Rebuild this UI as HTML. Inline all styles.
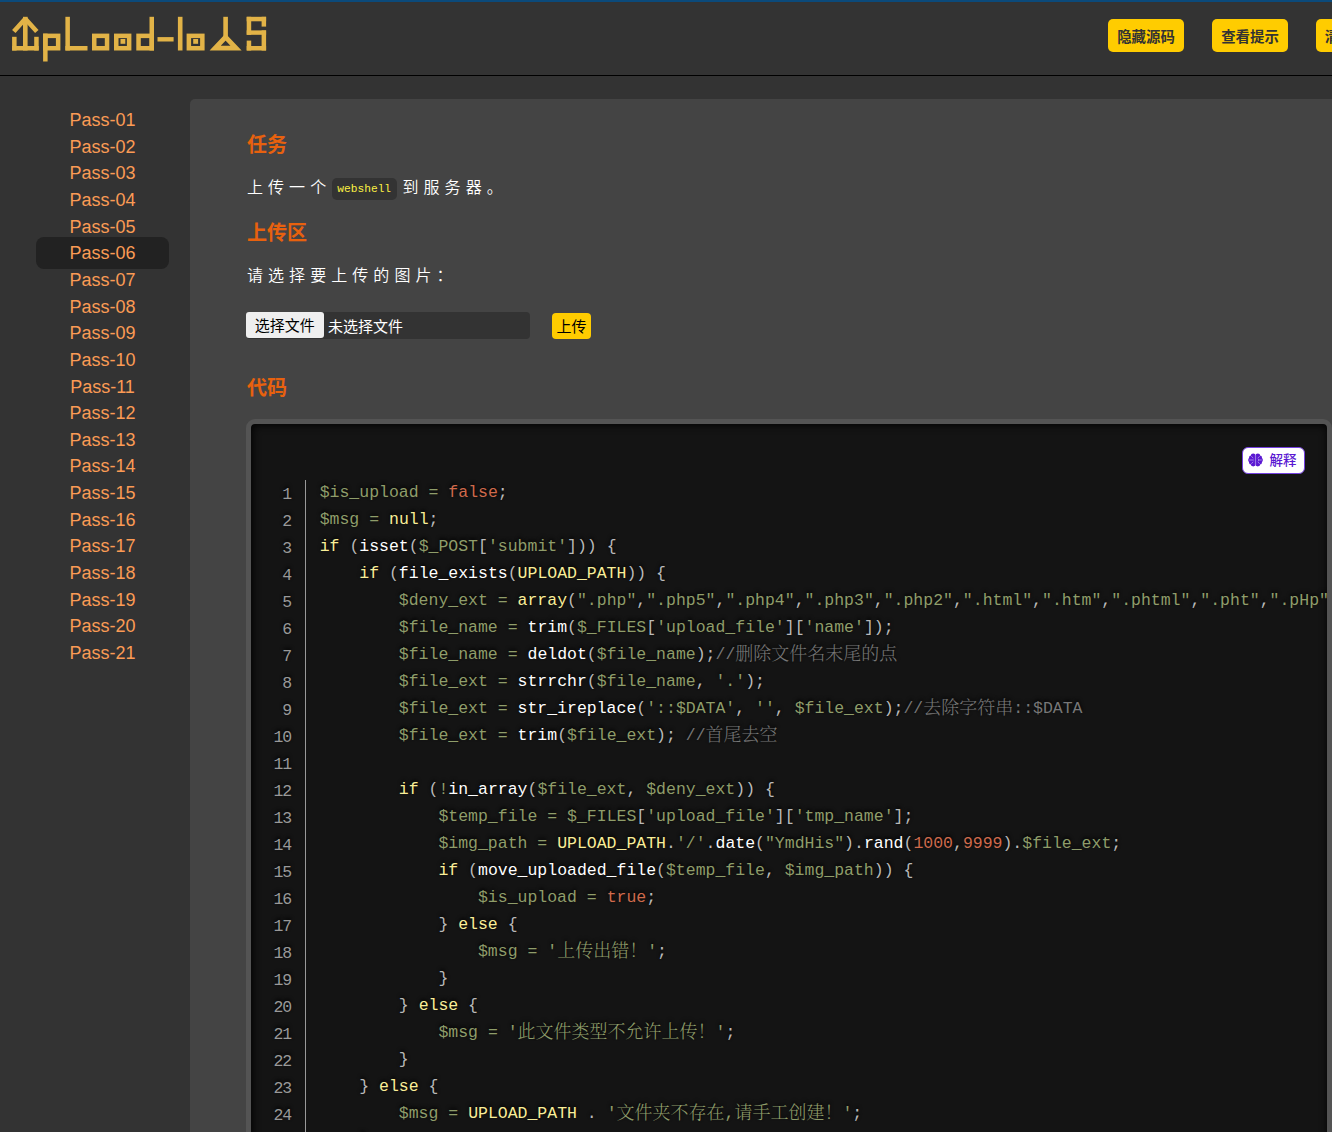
<!DOCTYPE html>
<html lang="zh-CN">
<head>
<meta charset="utf-8">
<title>upload-labs</title>
<style>
*{box-sizing:border-box;}
html,body{margin:0;padding:0;}
body{width:1332px;height:1132px;overflow:hidden;background:#333;color:#fff;position:relative;
  font-family:"Liberation Sans","Noto Sans CJK SC",sans-serif;font-size:16px;}
#topbar{position:absolute;left:0;top:0;width:1332px;height:2px;background:#0b4a7b;}
#head{position:absolute;left:0;top:0;width:1332px;height:76px;border-bottom:1px solid #000;}
#logo{position:absolute;left:0;top:0;width:280px;height:76px;}
.hbtn{position:absolute;top:19px;height:33px;width:76px;background:#ffcc00;color:#333;border-radius:5px;
  font-size:14.4px;font-weight:bold;line-height:33px;padding-top:1.6px;text-align:center;white-space:nowrap;text-decoration:none;}
#menu{position:absolute;left:0;top:76px;width:190px;margin:0;padding:0;list-style:none;}
#menu li{position:absolute;left:36px;width:133px;height:32px;line-height:33px;text-align:center;border-radius:8px;
  font-size:18px;color:#fb9b55;}
#menu li.on{background:#222;}
#main{position:absolute;left:190px;top:99px;width:1160px;height:1060px;background:#444;border-radius:5px 0 0 0;}
h3{position:absolute;margin:0;left:247px;font-size:20px;line-height:24px;font-weight:bold;color:#e8610e;
  font-family:"Liberation Sans","Noto Sans CJK SC",sans-serif;}
.p{position:absolute;left:247px;font-weight:350;font-size:16px;line-height:24px;letter-spacing:5.06px;color:#fff;white-space:nowrap;}
.p code{display:inline-block;letter-spacing:0;font-family:"Liberation Mono","Noto Sans CJK SC",monospace;font-size:11.2px;
  background:#333;color:#fbf043;border-radius:5px;height:22px;line-height:23.5px;padding:0 5.6px;vertical-align:middle;margin:-1px 5.8px 0 0.5px;}
#file{position:absolute;left:246px;top:312px;width:284px;height:27px;background:#333;border-radius:4px;}
#file .b{position:absolute;left:0;top:0;width:77.5px;height:26px;background:#efefef;border-radius:3px;
  color:#000;font-size:15px;line-height:28px;text-align:center;}
#file .t{position:absolute;left:82px;top:1px;height:25px;line-height:27px;font-size:15px;color:#fff;white-space:nowrap;}
#up{position:absolute;left:552px;top:313px;width:39px;height:26px;background:#ffcc00;border-radius:4px;color:#000;
  font-size:15px;line-height:27.5px;text-align:center;}
#codebox{position:absolute;left:246px;top:419px;width:1086px;height:760px;background:#141414;border:5px solid #545454;border-radius:9px;overflow:hidden;
  box-shadow:1px 1px 9px #000 inset;}
#explain{position:absolute;left:1242px;top:447px;width:63px;height:27px;background:#fff;border:1px solid #7440e0;border-radius:6px;color:#5a17d2;font-size:13.5px;font-weight:500;line-height:25px;}
#explain span{position:absolute;left:26.5px;top:0;}
#explain svg{position:absolute;left:4.6px;top:5px;}
#code{position:absolute;left:0;top:0;margin:0;padding:0;list-style:none;
  font-family:"Liberation Mono","Noto Serif CJK SC",monospace;font-size:16.49px;color:#b9b9b9;text-shadow:0 -1.8px 3.6px #000;}
#code li{position:absolute;left:0;height:27px;line-height:27px;white-space:pre;}
#code li i{position:absolute;left:0px;top:2.1px;width:40.2px;text-align:right;font-style:normal;color:#999;letter-spacing:-1px;}
#code li b{position:absolute;left:68.7px;font-weight:normal;}
#vline{position:absolute;left:54px;top:56px;width:1px;height:720px;background:#999;}
.v{color:#8f9d6a;} .s{color:#8f9d6a;} .k{color:#f9ee98;} .f{color:#fff;} .c{color:#f9ee98;} .n{color:#cf6a4c;} .m{color:#777;} .l{color:#cf6a4c;} .z{font-size:18px;font-weight:300;position:relative;top:1.5px;}
</style>
</head>
<body>
<div id="head">
  <svg id="logo" viewBox="0 0 280 76" role="img" aria-label="UpLoad-labs"><title>UpLoad-labs</title><g fill="#e2b347"><rect x="12.10" y="36.80" width="4.50" height="13.70"/><rect x="34.20" y="36.80" width="4.50" height="13.70"/><rect x="12.10" y="46.00" width="26.60" height="4.50"/><rect x="23.00" y="16.80" width="4.60" height="33.70"/><polyline points="13.8,31.5 25.3,18.7 36.8,31.5" fill="none" stroke="#e2b347" stroke-width="4.6" stroke-linejoin="bevel"/><rect x="43.10" y="33.60" width="4.50" height="27.90"/><rect x="45.35" y="35.85" width="12.80" height="12.40" fill="none" stroke="#e2b347" stroke-width="4.5"/><rect x="65.40" y="16.80" width="4.50" height="33.70"/><rect x="65.40" y="46.00" width="22.10" height="4.50"/><rect x="94.25" y="35.85" width="12.80" height="12.40" fill="none" stroke="#e2b347" stroke-width="4.5"/><rect x="116.25" y="35.85" width="12.90" height="12.40" fill="none" stroke="#e2b347" stroke-width="4.5"/><rect x="120.50" y="39.00" width="4.80" height="4.80"/><rect x="138.55" y="35.85" width="13.20" height="12.40" fill="none" stroke="#e2b347" stroke-width="4.5"/><rect x="149.50" y="16.80" width="4.50" height="33.70"/><rect x="157.50" y="37.10" width="16.10" height="4.40"/><rect x="177.90" y="16.80" width="4.60" height="33.70"/><rect x="188.85" y="35.85" width="13.50" height="12.40" fill="none" stroke="#e2b347" stroke-width="4.5"/><rect x="193.20" y="39.00" width="4.90" height="4.80"/><rect x="223.30" y="16.80" width="4.60" height="23.20"/><polygon points="225.6,37.04 236.0,48.07 215.2,48.07" fill="none" stroke="#e2b347" stroke-width="4.85" stroke-linejoin="miter"/><rect x="246.70" y="16.80" width="19.40" height="4.50"/><rect x="246.70" y="16.80" width="4.50" height="18.00"/><rect x="246.70" y="30.40" width="19.40" height="4.40"/><rect x="261.60" y="30.40" width="4.50" height="20.10"/><rect x="246.70" y="46.00" width="19.40" height="4.50"/><rect x="261.60" y="16.80" width="4.50" height="9.80"/><rect x="246.70" y="40.60" width="4.50" height="9.90"/></g></svg>
  <a class="hbtn" style="left:1108px">隐藏源码</a>
  <a class="hbtn" style="left:1212px">查看提示</a>
  <a class="hbtn" style="left:1316px;width:104px;">清空上传文件</a>
</div>
<div id="topbar"></div>
<ul id="menu">
  <li style="top:28.00px">Pass-01</li>
  <li style="top:54.65px">Pass-02</li>
  <li style="top:81.30px">Pass-03</li>
  <li style="top:107.95px">Pass-04</li>
  <li style="top:134.60px">Pass-05</li>
  <li class="on" style="top:161.25px">Pass-06</li>
  <li style="top:187.90px">Pass-07</li>
  <li style="top:214.55px">Pass-08</li>
  <li style="top:241.20px">Pass-09</li>
  <li style="top:267.85px">Pass-10</li>
  <li style="top:294.50px">Pass-11</li>
  <li style="top:321.15px">Pass-12</li>
  <li style="top:347.80px">Pass-13</li>
  <li style="top:374.45px">Pass-14</li>
  <li style="top:401.10px">Pass-15</li>
  <li style="top:427.75px">Pass-16</li>
  <li style="top:454.40px">Pass-17</li>
  <li style="top:481.05px">Pass-18</li>
  <li style="top:507.70px">Pass-19</li>
  <li style="top:534.35px">Pass-20</li>
  <li style="top:561.00px">Pass-21</li>
</ul>
<div id="main"></div>
<h3 style="top:133px">任务</h3>
<div class="p" style="top:176.3px">上传一个<code>webshell</code>到服务器。</div>
<h3 style="top:221px">上传区</h3>
<div class="p" style="top:264.3px">请选择要上传的图片：</div>
<div id="file"><span class="b">选择文件</span><span class="t">未选择文件</span></div>
<div id="up">上传</div>
<h3 style="top:376px">代码</h3>
<div id="codebox">
  <div id="vline"></div>
  <ol id="code">
    <li style="top:54.9px"><i>1</i><b><span class="v">$is_upload</span> <span class="v">=</span> <span class="l">false</span>;</b></li>
    <li style="top:81.9px"><i>2</i><b><span class="v">$msg</span> <span class="v">=</span> <span class="k">null</span>;</b></li>
    <li style="top:108.9px"><i>3</i><b><span class="k">if</span> (<span class="f">isset</span>(<span class="v">$_POST</span>[<span class="s">'submit'</span>])) {</b></li>
    <li style="top:135.9px"><i>4</i><b>    <span class="k">if</span> (<span class="f">file_exists</span>(<span class="c">UPLOAD_PATH</span>)) {</b></li>
    <li style="top:162.9px"><i>5</i><b>        <span class="v">$deny_ext</span> <span class="v">=</span> <span class="k">array</span>(<span class="s">".php"</span>,<span class="s">".php5"</span>,<span class="s">".php4"</span>,<span class="s">".php3"</span>,<span class="s">".php2"</span>,<span class="s">".html"</span>,<span class="s">".htm"</span>,<span class="s">".phtml"</span>,<span class="s">".pht"</span>,<span class="s">".pHp"</span>,<span class="s">".pHp5"</span>,<span class="s">".pHp4"</span>,<span class="s">".pHp3"</span>,<span class="s">".pHp2"</span>,<span class="s">".Html"</span>,<span class="s">".Htm"</span>,<span class="s">".pHtml"</span>,<span class="s">".jsp"</span>,<span class="s">".jspa"</span>,<span class="s">".jspx"</span>,<span class="s">".jsw"</span>,<span class="s">".jsv"</span>,<span class="s">".jspf"</span>,<span class="s">".jtml"</span>,<span class="s">".jSp"</span>,<span class="s">".jSpx"</span>,<span class="s">".jSpa"</span>,<span class="s">".jSw"</span>,<span class="s">".jSv"</span>,<span class="s">".jSpf"</span>,<span class="s">".jHtml"</span>,<span class="s">".asp"</span>,<span class="s">".aspx"</span>,<span class="s">".asa"</span>,<span class="s">".asax"</span>,<span class="s">".ascx"</span>,<span class="s">".ashx"</span>,<span class="s">".asmx"</span>,<span class="s">".cer"</span>,<span class="s">".aSp"</span>,<span class="s">".aSpx"</span>,<span class="s">".aSa"</span>,<span class="s">".aSax"</span>,<span class="s">".aScx"</span>,<span class="s">".aShx"</span>,<span class="s">".aSmx"</span>,<span class="s">".cEr"</span>,<span class="s">".sWf"</span>,<span class="s">".swf"</span>,<span class="s">".htaccess"</span>,<span class="s">".ini"</span>);</b></li>
    <li style="top:189.9px"><i>6</i><b>        <span class="v">$file_name</span> <span class="v">=</span> <span class="f">trim</span>(<span class="v">$_FILES</span>[<span class="s">'upload_file'</span>][<span class="s">'name'</span>]);</b></li>
    <li style="top:216.9px"><i>7</i><b>        <span class="v">$file_name</span> <span class="v">=</span> <span class="f">deldot</span>(<span class="v">$file_name</span>);<span class="m">//<span class="z">删除文件名末尾的点</span></span></b></li>
    <li style="top:243.9px"><i>8</i><b>        <span class="v">$file_ext</span> <span class="v">=</span> <span class="f">strrchr</span>(<span class="v">$file_name</span>, <span class="s">'.'</span>);</b></li>
    <li style="top:270.9px"><i>9</i><b>        <span class="v">$file_ext</span> <span class="v">=</span> <span class="f">str_ireplace</span>(<span class="s">'::$DATA'</span>, <span class="s">''</span>, <span class="v">$file_ext</span>);<span class="m">//<span class="z">去除字符串</span>::$DATA</span></b></li>
    <li style="top:297.9px"><i>10</i><b>        <span class="v">$file_ext</span> <span class="v">=</span> <span class="f">trim</span>(<span class="v">$file_ext</span>); <span class="m">//<span class="z">首尾去空</span></span></b></li>
    <li style="top:324.9px"><i>11</i><b></b></li>
    <li style="top:351.9px"><i>12</i><b>        <span class="k">if</span> (<span class="v">!</span><span class="f">in_array</span>(<span class="v">$file_ext</span>, <span class="v">$deny_ext</span>)) {</b></li>
    <li style="top:378.9px"><i>13</i><b>            <span class="v">$temp_file</span> <span class="v">=</span> <span class="v">$_FILES</span>[<span class="s">'upload_file'</span>][<span class="s">'tmp_name'</span>];</b></li>
    <li style="top:405.9px"><i>14</i><b>            <span class="v">$img_path</span> <span class="v">=</span> <span class="c">UPLOAD_PATH</span>.<span class="s">'/'</span>.<span class="f">date</span>(<span class="s">"YmdHis"</span>).<span class="f">rand</span>(<span class="n">1000</span>,<span class="n">9999</span>).<span class="v">$file_ext</span>;</b></li>
    <li style="top:432.9px"><i>15</i><b>            <span class="k">if</span> (<span class="f">move_uploaded_file</span>(<span class="v">$temp_file</span>, <span class="v">$img_path</span>)) {</b></li>
    <li style="top:459.9px"><i>16</i><b>                <span class="v">$is_upload</span> <span class="v">=</span> <span class="l">true</span>;</b></li>
    <li style="top:486.9px"><i>17</i><b>            } <span class="k">else</span> {</b></li>
    <li style="top:513.9px"><i>18</i><b>                <span class="v">$msg</span> <span class="v">=</span> <span class="s">'<span class="z">上传出错！</span>'</span>;</b></li>
    <li style="top:540.9px"><i>19</i><b>            }</b></li>
    <li style="top:567.9px"><i>20</i><b>        } <span class="k">else</span> {</b></li>
    <li style="top:594.9px"><i>21</i><b>            <span class="v">$msg</span> <span class="v">=</span> <span class="s">'<span class="z">此文件类型不允许上传！</span>'</span>;</b></li>
    <li style="top:621.9px"><i>22</i><b>        }</b></li>
    <li style="top:648.9px"><i>23</i><b>    } <span class="k">else</span> {</b></li>
    <li style="top:675.9px"><i>24</i><b>        <span class="v">$msg</span> <span class="v">=</span> <span class="c">UPLOAD_PATH</span> . <span class="s">'<span class="z">文件夹不存在</span>,<span class="z">请手工创建！</span>'</span>;</b></li>
    <li style="top:702.9px"><i>25</i><b>    }</b></li>
    <li style="top:729.9px"><i>26</i><b>}</b></li>
  </ol>
</div>
<div id="explain"><svg width="15" height="14" viewBox="0 0 15 14"><g fill="#5a17d2"><circle cx="5.2" cy="2.9" r="2.3"/><circle cx="3.1" cy="4.6" r="2.1"/><circle cx="2.4" cy="7.0" r="2.3"/><circle cx="3.1" cy="9.4" r="2.1"/><circle cx="5.2" cy="11.1" r="2.3"/><rect x="3.2" y="1.2" width="3.8" height="11.6" rx="1"/><circle cx="9.8" cy="2.9" r="2.3"/><circle cx="11.9" cy="4.6" r="2.1"/><circle cx="12.6" cy="7.0" r="2.3"/><circle cx="11.9" cy="9.4" r="2.1"/><circle cx="9.8" cy="11.1" r="2.3"/><rect x="8.0" y="1.2" width="3.8" height="11.6" rx="1"/></g><rect x="6.9" y="1.6" width="1.2" height="10.8" fill="#9a78e6"/><g stroke="#c9b6f3" stroke-width="0.7" fill="none" stroke-linecap="round"><path d="M1.6 7H5.4M3.6 3.6L5 4.8M3.6 10.4L5 9.2M13.4 7H11.2M11.4 3.6L10 4.8M11.4 10.4L10 9.2M10.6 6.2V7.8"/></g></svg><span>解释</span></div>
</body>
</html>
